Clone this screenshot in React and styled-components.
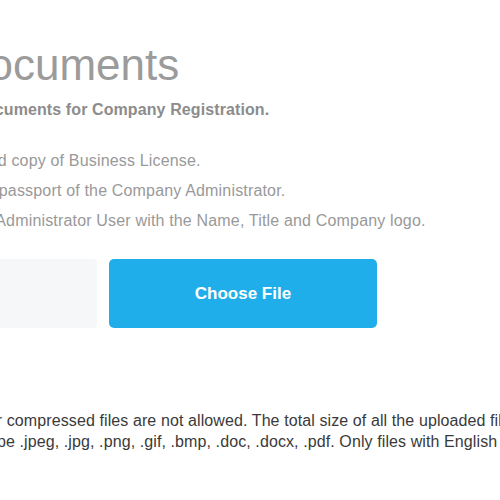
import React from "react";
import styled, { createGlobalStyle } from "styled-components";

const Global = createGlobalStyle`
  html, body { margin: 0; padding: 0; background: #ffffff; }
  body { font-family: "Liberation Sans", Arial, sans-serif; }
`;

const Page = styled.div`
  width: 500px;
  height: 500px;
  overflow: hidden;
  background: #ffffff;
  position: relative;
`;

const Column = styled.div`
  margin-left: -200px;
  padding-top: 40px;
  display: flex;
  flex-direction: column;
  white-space: nowrap;
`;

const Block = styled.div`
  padding-left: ${(p) => p.$indent || 0}px;
  margin-top: ${(p) => p.$top || 0}px;
  display: flex;
  flex-direction: column;
`;

const Title = styled.h1`
  margin: 0;
  font-size: 44px;
  line-height: 50px;
  font-weight: 400;
  color: #9b9b9b;
`;

const Subtitle = styled.p`
  margin: 0;
  font-size: 16px;
  line-height: 20px;
  font-weight: 700;
  letter-spacing: 0.1px;
  color: #8c8c8c;
`;

const Item = styled.div`
  font-size: 16px;
  line-height: 30px;
  letter-spacing: 0.17px;
  color: #999999;
`;

const UploadRow = styled.div`
  display: flex;
  gap: 12px;
`;

const DropZone = styled.div`
  width: 268px;
  height: 69px;
  background: #f6f7f9;
  border-radius: 4px;
`;

const ChooseButton = styled.button`
  width: 268px;
  height: 69px;
  border: none;
  border-radius: 5px;
  background: #20aeea;
  color: #ffffff;
  font-family: "Liberation Sans", Arial, sans-serif;
  font-size: 17px;
  font-weight: 700;
  display: flex;
  align-items: center;
  justify-content: center;
  padding: 0;
  cursor: pointer;
`;

const NoteLine = styled.div`
  font-size: 16px;
  line-height: 21px;
  letter-spacing: 0.1px;
  color: #3a3a3a;
`;

export default function App() {
  return (
    <>
      <Global />
      <Page>
        <Column>
          <Block $indent={5}>
            <Title>Upload Documents</Title>
          </Block>
          <Block $indent={22} $top={10}>
            <Subtitle>Please upload your documents for Company Registration.</Subtitle>
          </Block>
          <Block $indent={73} $top={26}>
            <Item>1. A clear scanned copy of Business License.</Item>
            <Item>2. A copy of your passport of the Company Administrator.</Item>
            <Item>3. A photo of the Administrator User with the Name, Title and Company logo.</Item>
          </Block>
          <Block $indent={29} $top={23}>
            <UploadRow>
              <DropZone />
              <ChooseButton type="button">Choose File</ChooseButton>
            </UploadRow>
          </Block>
          <Block $indent={67} $top={82}>
            <NoteLine>
              Note: Encrypted or compressed files are not allowed. The total size of all the uploaded files must not exceed 10 MB.
            </NoteLine>
            <NoteLine>
              Supported files: type .jpeg, .jpg, .png, .gif, .bmp, .doc, .docx, .pdf. Only files with English names are accepted.
            </NoteLine>
          </Block>
        </Column>
      </Page>
    </>
  );
}
